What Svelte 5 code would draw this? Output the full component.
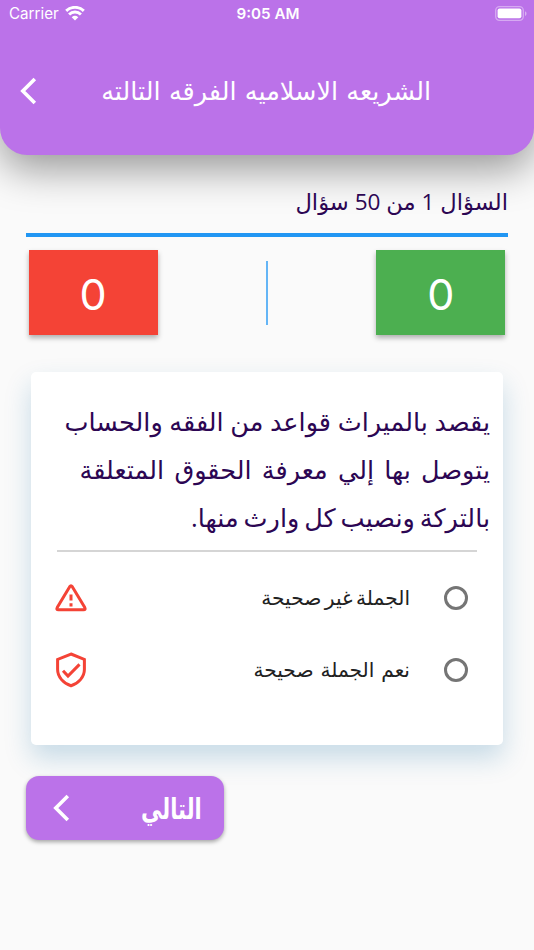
<script lang="ts">
  interface Answer {
    id: number;
    text: string;
    icon: 'warning' | 'shield';
  }

  const title = 'الشريعه الاسلاميه الفرقه التالته';
  const current = 1;
  const total = 50;

  const question = [
    'يقصد بالميراث قواعد من الفقه والحساب',
    'يتوصل بها إلي معرفة الحقوق المتعلقة',
    'بالتركة ونصيب كل وارث منها.',
  ];

  const answers: Answer[] = [
    { id: 0, text: 'الجملة غير صحيحة', icon: 'warning' },
    { id: 1, text: 'نعم الجملة صحيحة', icon: 'shield' },
  ];

  let correct = $state(0);
  let wrong = $state(0);
  let selected = $state<number | null>(null);
</script>

{#snippet chevron()}
  <svg class="chevron" width="18" height="28" viewBox="0 0 18 28" aria-hidden="true">
    <path d="M14.800 2 2.800 14l12 12" fill="none" stroke="#fff" stroke-width="3.600" />
  </svg>
{/snippet}

<div class="screen" dir="rtl">
  <header class="header">
    <div class="status" dir="ltr">
      <div class="carrier">
        <span>Carrier</span>
        <svg width="20" height="15" viewBox="0 0 20 15" aria-hidden="true">
          <g fill="none" stroke="#fff" stroke-width="2.9">
            <path d="M1.200 4.900a12.600 12.600 0 0 1 17.600 0" />
            <path d="M4.100 8.500a8.300 8.300 0 0 1 11.800 0" />
          </g>
          <path d="M6.700 11.200a5 5 0 0 1 6.600 0L10 14.600z" fill="#fff" />
        </svg>
      </div>
      <span class="time">9:05 AM</span>
      <svg class="battery" width="32" height="15" viewBox="0 0 32 15" aria-hidden="true">
        <rect x=".7" y=".7" width="27.6" height="13.6" rx="3.8" fill="none" stroke="#fff" stroke-opacity=".4" stroke-width="1.3" />
        <rect x="2.6" y="2.6" width="23.8" height="9.6" rx="2" fill="#fff" />
        <path d="M30 5.3c2 .8 2 3.800 0 4.600z" fill="#fff" fill-opacity=".45" />
      </svg>
    </div>
    <div class="toolbar">
      <h1>{title}</h1>
      <button class="back" aria-label="رجوع">{@render chevron()}</button>
    </div>
  </header>

  <main>
    <p class="progress">السؤال {current} من {total} سؤال</p>

    <div class="scores">
      <div class="score correct">{correct}</div>
      <div class="separator"></div>
      <div class="score wrong">{wrong}</div>
    </div>

    <section class="card">
      <h2>
        {#each question as line, i}
          <span class="line line-{i + 1}">{line}</span>
        {/each}
      </h2>
      <div class="answers">
        {#each answers as answer (answer.id)}
          <button class="answer" onclick={() => (selected = answer.id)}>
            <span class="radio" class:checked={selected === answer.id}></span>
            <span class="answer-text">{answer.text}</span>
            {#if answer.icon === 'warning'}
              <svg width="36" height="36" viewBox="0 0 36 36" aria-hidden="true">
                <path d="M16.700 6.700 4.200 27.600q-1.100 2.200 1.200 2.200h25.200q2.300 0 1.200-2.200L19.300 6.700q-1.300-1.800-2.600 0z" fill="none" stroke="#f44336" stroke-width="3" stroke-linejoin="round" />
                <path d="M18 14.500v6M18 23.300v3.200" fill="none" stroke="#f44336" stroke-width="3" />
              </svg>
            {:else}
              <svg width="36" height="36" viewBox="0 0 36 36" aria-hidden="true">
                <path d="M18 2 31.400 7.400v10.200c0 7.600-6 13.800-13.400 16.100C10.600 31.400 4.600 25.200 4.600 17.600V7.400z" fill="none" stroke="#f44336" stroke-width="3" />
                <path d="m10 18.700 5 5.400 11.500-11.700" fill="none" stroke="#f44336" stroke-width="3" />
              </svg>
            {/if}
          </button>
        {/each}
      </div>
    </section>

    <button class="next">
      <span class="next-label">التالي</span>
      {@render chevron()}
    </button>
  </main>
</div>

<style>
  :global(body) {
    background: #fafafa;
  }

  .screen {
    width: 534px;
    height: 950px;
    overflow: hidden;
    background: #fafafa;
    font-family: 'Open Sans', 'DejaVu Sans', sans-serif;
    color: #2c0653;
  }

  button {
    padding: 0;
    border: none;
    background: none;
    font: inherit;
    color: inherit;
    cursor: pointer;
  }

  h1,
  h2,
  p {
    margin: 0;
    font-weight: 400;
    white-space: nowrap;
  }

  svg {
    display: block;
    flex-shrink: 0;
  }

  .header {
    height: 155px;
    background: #bb72e9;
    border-radius: 0 0 27px 27px;
    box-shadow: 0 14px 40px rgba(0, 0, 0, 0.4);
    color: #fff;
  }

  .status {
    display: grid;
    grid-template-columns: 1fr auto 1fr;
    align-items: center;
    height: 27px;
    padding: 0 7px 0 9px;
    font-family: Inter, sans-serif;
    font-size: 15.2px;
  }

  .carrier {
    display: flex;
    align-items: center;
    gap: 6px;
  }

  .time {
    font-weight: 600;
  }

  .battery {
    justify-self: end;
  }

  .toolbar {
    display: flex;
    align-items: center;
    justify-content: space-between;
    height: 128px;
    padding: 0 103px 0 20px;
  }

  h1 {
    padding-bottom: 3px;
    font-size: 25.5px;
    word-spacing: 1.6px;
  }

  main {
    padding: 24px 26px 0;
  }

  .progress {
    height: 54px;
    line-height: 46px;
    border-bottom: 4px solid #2196f3;
    font-size: 22.6px;
  }

  .scores {
    display: flex;
    align-items: center;
    justify-content: space-between;
    padding: 13.4px 2.6px 0;
  }

  .score {
    width: 129px;
    height: 85px;
    line-height: 88px;
    text-align: center;
    font-family: Inter, sans-serif;
    font-size: 43px;
    font-weight: 400;
    color: #fff;
    box-shadow: 0 3px 5px rgba(0, 0, 0, 0.3);
  }

  .correct {
    background: #4caf50;
  }

  .wrong {
    background: #f44336;
  }

  .separator {
    width: 2px;
    height: 64px;
    background: #64b5f6;
  }

  .card {
    height: 373px;
    margin: 36.6px 5px 0;
    border-radius: 5px;
    background: #fff;
    box-shadow: 0 13px 27px rgba(20, 110, 165, 0.22);
  }

  h2 {
    height: 178px;
    box-sizing: border-box;
    padding: 25px 13px 0;
    font-size: 25.5px;
    line-height: 48px;
  }

  .line {
    display: block;
  }

  .line-2 {
    word-spacing: 3.6px;
  }

  .line-3 {
    word-spacing: -1.7px;
  }

  .answers {
    margin: 0 26px;
    padding-top: 10px;
    border-top: 2px solid #d5d5d5;
  }

  .answer {
    display: flex;
    align-items: center;
    width: 100%;
    height: 72px;
    padding: 0 9px 0 0;
    color: #212121;
    font-size: 20.2px;
  }

  .radio {
    box-sizing: border-box;
    width: 24px;
    height: 24px;
    border: 3px solid #757575;
    border-radius: 50%;
  }

  .radio.checked {
    border-color: #bb72e9;
  }

  .answer-text {
    flex: 1;
    padding-right: 34px;
    padding-bottom: 2px;
    text-align: right;
    white-space: nowrap;
  }

  .answer:first-child .answer-text {
    word-spacing: -1.8px;
  }

  .answer:last-child .answer-text {
    word-spacing: 1.6px;
  }

  .answer svg {
    margin-left: -4px;
  }

  .next {
    display: flex;
    align-items: center;
    justify-content: space-between;
    box-sizing: border-box;
    width: 198px;
    height: 64px;
    margin: 31px auto 0 0;
    padding: 0 22px 0 27px;
    border-radius: 13px;
    background: #bb72e9;
    box-shadow: 0 2px 4px rgba(0, 0, 0, 0.35);
    color: #fff;
    font-size: 29px;
    font-weight: 700;
  }

  .next-label {
    transform: scaleX(0.725);
    transform-origin: right center;
  }
</style>
